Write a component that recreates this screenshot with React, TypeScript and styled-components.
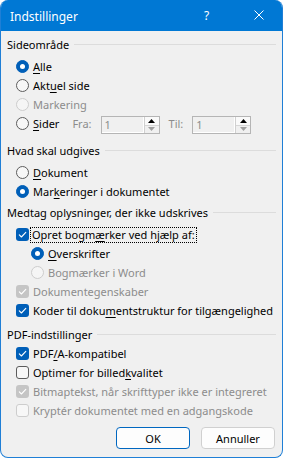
import { styled, createGlobalStyle } from "styled-components";

const GlobalStyle = createGlobalStyle`
  html, body {
    margin: 0;
    padding: 0;
    background: #ffffff;
  }
  * {
    box-sizing: border-box;
  }
`;

const font = `"Noto Sans", "Liberation Sans", sans-serif`;

function Check() {
  return (
    <svg width="13" height="13" viewBox="0 0 13 13">
      <path
        d="M3.3 6.9 L5.4 9 L9.8 4.4"
        fill="none"
        stroke="#ffffff"
        strokeWidth="1.1"
        strokeLinecap="round"
        strokeLinejoin="round"
      />
    </svg>
  );
}

function SpinField() {
  return (
    <Spin>
      <SpinValue>1</SpinValue>
      <SpinButtons>
        <SpinHalf>
          <svg width="7" height="4" viewBox="0 0 7 4">
            <path d="M0 4 L3.5 0 L7 4 Z" fill="#000" />
          </svg>
        </SpinHalf>
        <SpinHalf>
          <svg width="7" height="4" viewBox="0 0 7 4">
            <path d="M0 0 L3.5 4 L7 0 Z" fill="#a0a0a0" />
          </svg>
        </SpinHalf>
      </SpinButtons>
    </Spin>
  );
}

export default function App() {
  return (
    <>
      <GlobalStyle />
      <Window>
        <TitleBar>
          <Title>Indstillinger</Title>
          <HelpButton>?</HelpButton>
          <CloseButton>
            <svg width="10" height="10" viewBox="0 0 10 10">
              <path d="M0.5 0.5 L9.5 9.5 M9.5 0.5 L0.5 9.5" stroke="#fff" strokeWidth="1" />
            </svg>
          </CloseButton>
        </TitleBar>

        <Content>
          <Heading $top={3}>Sideområde</Heading>
          <Row $top={3}>
            <Radio $checked />
            <Label>
              <U>A</U>lle
            </Label>
          </Row>
          <Row>
            <Radio />
            <Label>
              Akt<U>u</U>el side
            </Label>
          </Row>
          <Row>
            <Radio $disabled />
            <Label $disabled>Markering</Label>
          </Row>
          <SpinRow>
            <Radio />
            <Label>
              <U>S</U>ider
            </Label>
            <FieldLabel $left={9}>Fra:</FieldLabel>
            <SpinField />
            <FieldLabel $left={5}>Til:</FieldLabel>
            <SpinField />
          </SpinRow>

          <Heading $top={5}>Hvad skal udgives</Heading>
          <Row $top={3}>
            <Radio />
            <Label>
              <U>D</U>okument
            </Label>
          </Row>
          <Row>
            <Radio $checked />
            <Label>
              Mar<U>k</U>eringer i dokumentet
            </Label>
          </Row>

          <Heading $top={1}>Medtag oplysninger, der ikke udskrives</Heading>
          <Row $top={3}>
            <Checkbox $checked>
              <Check />
            </Checkbox>
            <FocusLabel>
              Opret bogm<U>æ</U>rker ved hjælp af:
            </FocusLabel>
          </Row>
          <Row $indent={15}>
            <Radio $checked />
            <Label>
              <U>O</U>verskrifter
            </Label>
          </Row>
          <Row $indent={15}>
            <Radio $disabled />
            <Label $disabled>Bogmærker i Word</Label>
          </Row>
          <Row>
            <Checkbox $checked $disabled>
              <Check />
            </Checkbox>
            <Label $disabled>Dokumentegenskaber</Label>
          </Row>
          <Row>
            <Checkbox $checked>
              <Check />
            </Checkbox>
            <Label>
              Koder til doku<U>m</U>entstruktur for tilgængelighed
            </Label>
          </Row>

          <Heading $top={4}>PDF-indstillinger</Heading>
          <Row>
            <Checkbox $checked>
              <Check />
            </Checkbox>
            <Label>
              PDF<U>/</U>A-kompatibel
            </Label>
          </Row>
          <Row>
            <Checkbox />
            <Label>
              Optimer for billed<U>k</U>valitet
            </Label>
          </Row>
          <Row>
            <Checkbox $checked $disabled>
              <Check />
            </Checkbox>
            <Label $disabled>Bitmaptekst, når skrifttyper ikke er integreret</Label>
          </Row>
          <Row>
            <Checkbox $disabled />
            <Label $disabled>Kryptér dokumentet med en adgangskode</Label>
          </Row>

          <ButtonRow>
            <DialogButton $default>OK</DialogButton>
            <DialogButton>Annuller</DialogButton>
          </ButtonRow>
        </Content>
      </Window>
    </>
  );
}

const Window = styled.div`
  width: 283px;
  height: 458px;
  display: flex;
  flex-direction: column;
  background: #f0f0f0;
  border: 1px solid #1f7fd6;
  border-top: none;
  border-radius: 8px;
  overflow: hidden;
  font-family: ${font};
  font-size: 11px;
  color: #000;
`;

const TitleBar = styled.div`
  height: 31px;
  flex-shrink: 0;
  display: flex;
  align-items: center;
  background: #0078d4;
  color: #fff;
  padding-left: 9px;
`;

const Title = styled.span`
  flex: 1;
  font-size: 12px;
  margin-top: 1px;
`;

const HelpButton = styled.span`
  width: 12px;
  font-size: 12px;
  margin-right: 38px;
  margin-top: -1px;
`;

const CloseButton = styled.span`
  display: flex;
  margin-right: 18px;
  margin-top: -1px;
`;

const Content = styled.div`
  display: flex;
  flex-direction: column;
  padding: 0 6px 0 6px;
`;

const Heading = styled.div<{ $top?: number }>`
  height: 20px;
  margin-top: ${({ $top }) => $top ?? 0}px;
  display: flex;
  align-items: center;
  gap: 5px;
  white-space: nowrap;
  &::after {
    content: "";
    flex: 1;
    height: 1px;
    background: #dcdcdc;
  }
`;

const Row = styled.div<{ $top?: number; $indent?: number }>`
  height: 19px;
  margin-top: ${({ $top }) => $top ?? 0}px;
  padding-left: ${({ $indent }) => 9 + ($indent ?? 0)}px;
  display: flex;
  align-items: center;
  gap: 4px;
  white-space: nowrap;
`;

const SpinRow = styled.div`
  height: 21px;
  padding-left: 9px;
  display: flex;
  align-items: flex-start;
  gap: 4px;
  white-space: nowrap;
  & > span:first-child {
    margin-top: 3px;
  }
`;

const Label = styled.span<{ $disabled?: boolean }>`
  line-height: 19px;
  color: ${({ $disabled }) => ($disabled ? "#8c8c8c" : "#000")};
`;

const FocusLabel = styled.span`
  line-height: 14px;
  padding: 0 1px;
  margin-left: -2px;
  outline: 1px dotted #000;
`;

const U = styled.span`
  text-decoration: underline;
  text-underline-offset: 2px;
`;

const Radio = styled.span<{ $checked?: boolean; $disabled?: boolean }>`
  position: relative;
  width: 13px;
  height: 13px;
  flex-shrink: 0;
  border-radius: 50%;
  background: ${({ $checked, $disabled }) =>
    $checked ? "#005fb8" : $disabled ? "#f5f5f5" : "#f7f7f7"};
  border: 1px solid
    ${({ $checked, $disabled }) =>
      $checked ? "#005fb8" : $disabled ? "#cdcdcd" : "#5c5c5c"};
  &::after {
    content: "";
    display: ${({ $checked }) => ($checked ? "block" : "none")};
    position: absolute;
    left: 3px;
    top: 3px;
    width: 5px;
    height: 5px;
    border-radius: 50%;
    background: #fff;
  }
`;

const Checkbox = styled.span<{ $checked?: boolean; $disabled?: boolean }>`
  width: 13px;
  height: 13px;
  flex-shrink: 0;
  display: flex;
  border-radius: 3px;
  background: ${({ $checked, $disabled }) =>
    $checked ? ($disabled ? "#c5c5c5" : "#005fb8") : "#f7f7f7"};
  border: ${({ $checked, $disabled }) =>
    $checked ? "none" : `1px solid ${$disabled ? "#cdcdcd" : "#5c5c5c"}`};
`;

const FieldLabel = styled.span<{ $left: number }>`
  line-height: 19px;
  margin-left: ${({ $left }) => $left}px;
  margin-right: 5px;
  color: #8c8c8c;
`;

const Spin = styled.div`
  width: 59px;
  height: 18px;
  margin-top: 2px;
  display: flex;
  border: 1px solid #b5b5b5;
  background: #f0f0f0;
`;

const SpinValue = styled.span`
  flex: 1;
  padding-left: 3px;
  line-height: 16px;
  color: #8c8c8c;
  border-right: 1px solid #fff;
  border-bottom: 1px solid #fff;
`;

const SpinButtons = styled.div`
  width: 15px;
  display: flex;
  flex-direction: column;
  border-left: 1px solid #d0d0d0;
`;

const SpinHalf = styled.span`
  flex: 1;
  display: flex;
  align-items: center;
  justify-content: center;
  background: #f0f0f0;
  &:first-child {
    background: #fafafa;
    border-bottom: 1px solid #d6d6d6;
  }
`;

const ButtonRow = styled.div`
  margin-top: 7px;
  display: flex;
  justify-content: flex-end;
  gap: 11px;
  padding-right: 1px;
`;

const DialogButton = styled.button<{ $default?: boolean }>`
  width: 74px;
  height: 22px;
  padding: 0;
  font-family: ${font};
  font-size: 11px;
  color: #000;
  background: #fdfdfd;
  border-radius: 4px;
  border: 1px solid ${({ $default }) => ($default ? "#0067c0" : "#d0d0d0")};
`;
